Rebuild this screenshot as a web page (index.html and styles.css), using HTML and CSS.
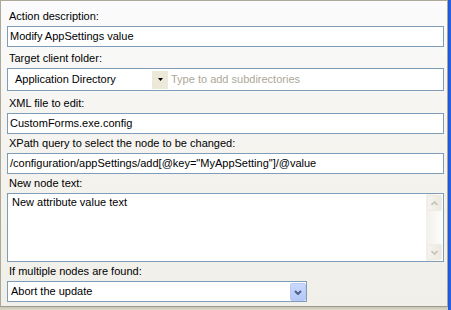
FILE: index.html
```html
<!DOCTYPE html>
<html>
<head>
<meta charset="utf-8">
<link rel="stylesheet" href="styles.css">
</head>
<body>
<div class="window">
  <div class="main">
    <div class="panel">
      <div class="field f1">
        <div class="label">Action description:</div>
        <div class="box">Modify AppSettings value</div>
      </div>
      <div class="field f2">
        <div class="label">Target client folder:</div>
        <div class="box folder">
          <div class="combo-text">Application Directory</div>
          <div class="combo-btn"><svg width="5" height="3" viewBox="0 0 5 3"><polygon points="0,0 5,0 2.5,3" fill="#000"/></svg></div>
          <div class="placeholder">Type to add subdirectories</div>
        </div>
      </div>
      <div class="field f3">
        <div class="label">XML file to edit:</div>
        <div class="box">CustomForms.exe.config</div>
      </div>
      <div class="field f4">
        <div class="label">XPath query to select the node to be changed:</div>
        <div class="box">/configuration/appSettings/add[@key="MyAppSetting"]/@value</div>
      </div>
      <div class="field f5">
        <div class="label">New node text:</div>
        <div class="box textarea">
          <div class="ta-text">New attribute value text</div>
          <div class="scrollbar">
            <div class="sb-btn"><svg width="7" height="5" viewBox="0 0 7 5"><polyline points="0.5,4 3.5,1 6.5,4" fill="none" stroke="#c5c2b6" stroke-width="1.6"/></svg></div>
            <div class="sb-btn"><svg width="7" height="5" viewBox="0 0 7 5"><polyline points="0.5,1 3.5,4 6.5,1" fill="none" stroke="#c5c2b6" stroke-width="1.6"/></svg></div>
          </div>
        </div>
      </div>
      <div class="field f6">
        <div class="label">If multiple nodes are found:</div>
        <div class="box select">
          <div class="select-text">Abort the update</div>
          <div class="select-btn"><svg width="8" height="5" viewBox="0 0 8 5"><polyline points="1,1 4,4 7,1" fill="none" stroke="#4d6185" stroke-width="2"/></svg></div>
        </div>
      </div>
    </div>
    <div class="bottom"></div>
  </div>
  <div class="edge"></div>
</div>
</body>
</html>
```
FILE: styles.css
```css
body {
  margin: 0;
}
.window {
  display: flex;
  width: 451px;
  height: 310px;
  font-family: "Liberation Sans", Arial, sans-serif;
  font-size: 11px;
  color: #000;
}
.main {
  width: 448px;
  display: flex;
  flex-direction: column;
}
.panel {
  height: 307px;
  box-sizing: border-box;
  border: 1px solid #aca899;
  border-bottom-color: #9d9a8c;
  background: linear-gradient(#fbfbfd, #f5f4f0 40%, #f1efe9);
  padding: 9px 3px 0 6px;
  display: flex;
  flex-direction: column;
}
.bottom {
  height: 3px;
  background: linear-gradient(#c9c4b2, #ddd9cb);
}
.edge {
  width: 3px;
  background: linear-gradient(to right, #1c54d8, #2a64e6);
}
.label {
  height: 13px;
  line-height: 13px;
  padding-left: 2px;
  margin-bottom: 3px;
  white-space: nowrap;
}
.f2 { margin-top: 5px; }
.f3 { margin-top: 6px; }
.f4, .f5, .f6 { margin-top: 3px; }
.box {
  box-sizing: border-box;
  border: 1px solid #7f9db9;
  background: #fff;
  height: 21px;
  line-height: 19px;
  padding: 0 2px;
  white-space: nowrap;
}
.folder {
  height: 23px;
  padding: 0;
  display: flex;
  align-items: center;
}
.combo-text {
  box-sizing: border-box;
  width: 144px;
  padding-left: 7px;
}
.combo-btn {
  width: 16px;
  height: 18px;
  background: #ece9d8;
  display: flex;
  align-items: center;
  justify-content: center;
}
.placeholder {
  margin-left: 3px;
  color: #aca899;
}
.textarea {
  height: 69px;
  padding: 0;
  display: flex;
  line-height: 13px;
}
.ta-text {
  flex: 1;
  padding: 2px 4px;
}
.scrollbar {
  width: 17px;
  display: flex;
  flex-direction: column;
  justify-content: space-between;
  background: linear-gradient(to right, #f2f0ea, #fdfdfb);
}
.sb-btn {
  box-sizing: border-box;
  width: 15px;
  height: 16px;
  margin: 1px;
  border: 1px solid #eeece4;
  border-radius: 2px;
  background: linear-gradient(to right, #f4f3ee, #ebe9e0);
  display: flex;
  align-items: center;
  justify-content: center;
}
.select {
  width: 300px;
  padding: 0 0 0 3px;
  display: flex;
  align-items: center;
}
.select-text {
  flex: 1;
}
.select-btn {
  box-sizing: border-box;
  width: 16px;
  height: 18px;
  margin-top: 1px;
  align-self: flex-start;
  border: 1px solid #b9cbf5;
  border-radius: 2px;
  background: linear-gradient(#cad8fe, #b4c8f9);
  display: flex;
  align-items: center;
  justify-content: center;
}
```
